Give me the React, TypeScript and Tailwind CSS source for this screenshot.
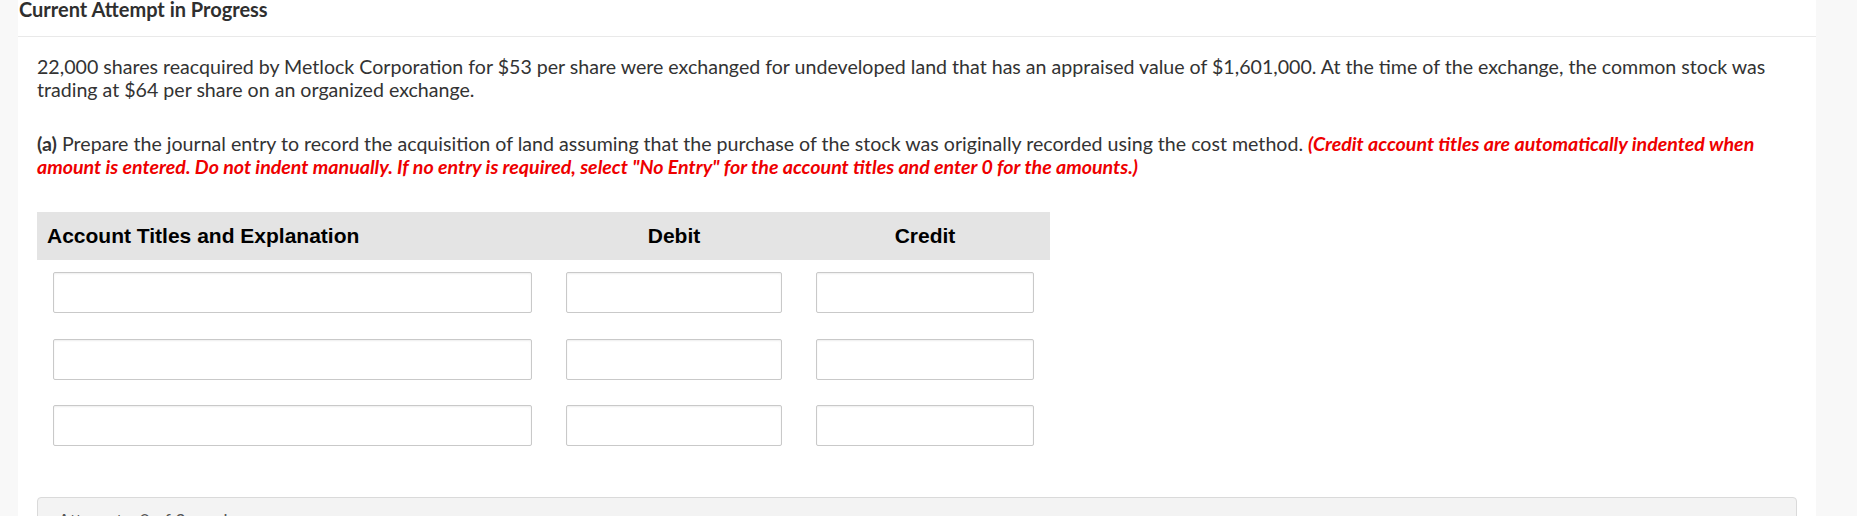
const rows = [0, 1, 2];

const JournalInput = ({ width }: { width: string }) => (
  <input
    type="text"
    className={`${width} h-[41px] rounded-[2px] border border-[#c9c9c9] bg-white shadow-[inset_0_1px_2px_rgba(0,0,0,0.07)] outline-none`}
  />
);

export default function App() {
  return (
    <div className="flex min-h-[516px] overflow-hidden bg-[#f8f8f8] font-['Lato',sans-serif] text-[#333333]">
      <div className="ml-[18px] w-[1798px] bg-white">
        {/* Title bar */}
        <div className="h-[37px] border-b border-[#e9e9e9] pl-px">
          <h1 className="text-[20px] font-bold leading-[18px] text-[#2f2f2f]">Current Attempt in Progress</h1>
        </div>

        <div className="px-[19px]">
          {/* Question text */}
          <p className="mt-[18px] text-[19.6px] leading-[23px]">
            22,000 shares reacquired by Metlock Corporation for $53 per share were exchanged for undeveloped land that has an
            appraised value of $1,601,000. At the time of the exchange, the common stock was trading at $64 per share on an
            organized exchange.
          </p>

          <p className="mt-[31px] text-[19.6px] leading-[23px]">
            <span className="font-bold">(a)</span> Prepare the journal entry to record the acquisition of land assuming that
            the purchase of the stock was originally recorded using the cost method.{" "}
            <span className="font-bold italic text-[#ee0000]">
              (Credit account titles are automatically indented when amount is entered. Do not indent manually. If no entry
              is required, select "No Entry" for the account titles and enter 0 for the amounts.)
            </span>
          </p>

          {/* Journal table */}
          <div className="mt-[34px] w-[1013px]">
            <div className="grid h-[48px] grid-cols-[479px_216px_218px] items-center gap-x-[34px] bg-[#e4e4e4] px-4 font-['Liberation_Sans',sans-serif] text-[21px] font-bold text-black">
              <div className="-ml-[6px]">Account Titles and Explanation</div>
              <div className="text-center">Debit</div>
              <div className="text-center">Credit</div>
            </div>

            <div className="mt-[12px] flex flex-col gap-y-[25.5px] px-4">
              {rows.map((row) => (
                <div key={row} className="flex gap-x-[34px]">
                  <JournalInput width="w-[479px]" />
                  <JournalInput width="w-[216px]" />
                  <JournalInput width="w-[218px]" />
                </div>
              ))}
            </div>
          </div>

          {/* Collapsed panel below */}
          <div className="mt-[51px] h-[40px] rounded-t-[4px] border border-[#dadada] bg-[#f3f3f3] px-5 pt-[9px] text-[18px] text-[#555555]">
            Attempts: 0 of 3 used
          </div>
        </div>
      </div>
    </div>
  );
}
